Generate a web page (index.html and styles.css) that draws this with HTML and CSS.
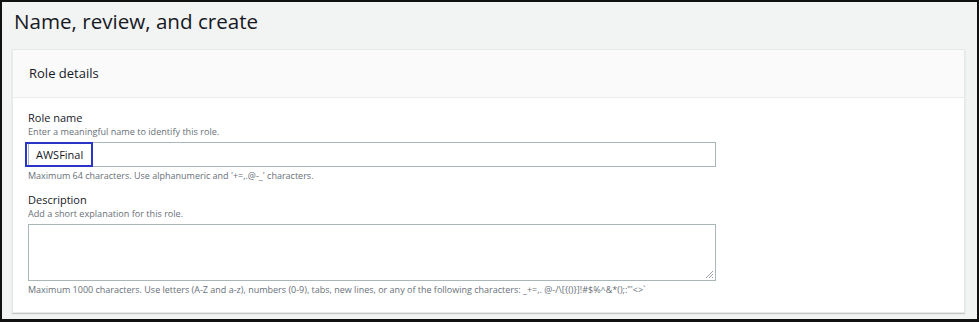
FILE: index.html
```html
<!DOCTYPE html>
<html>
<head>
<meta charset="utf-8">
<link rel="stylesheet" href="styles.css">
</head>
<body>
<div class="frame">
  <h1 class="title">Name, review, and create</h1>
  <section class="card">
    <header class="card-header">Role details</header>
    <div class="card-body">
      <div class="field">
        <div class="label">Role name</div>
        <div class="desc">Enter a meaningful name to identify this role.</div>
        <div class="input-wrap">
          <div class="input">AWSFinal</div>
          <div class="highlight"></div>
        </div>
        <div class="hint">Maximum 64 characters. Use alphanumeric and '+=,.@-_' characters.</div>
      </div>
      <div class="field">
        <div class="label">Description</div>
        <div class="desc">Add a short explanation for this role.</div>
        <div class="textarea">
          <svg class="grip" width="9" height="9" viewBox="0 0 9 9"><path d="M8 1 L1 8 M8 4 L4 8 M8 7 L7 8" stroke="#9aa0a6" stroke-width="1"/></svg>
        </div>
        <div class="hint">Maximum 1000 characters. Use letters (A-Z and a-z), numbers (0-9), tabs, new lines, or any of the following characters: _+=,. @-/\[{()}]!#$%^&amp;*();:"'&lt;&gt;`</div>
      </div>
    </div>
  </section>
</div>
</body>
</html>
```

FILE: styles.css
```css
* { box-sizing: border-box; }
html, body { margin: 0; padding: 0; }
body {
  width: 979px;
  height: 322px;
  background: #000;
  font-family: "Open Sans", "Liberation Sans", sans-serif;
  color: #16191f;
}
.frame {
  width: 979px;
  height: 322px;
  border-style: solid;
  border-color: #111;
  border-width: 2px 2px 3px 2px;
  background: #f2f3f3;
  padding: 0 12px 0 10px;
  overflow: hidden;
}
.title {
  margin: 0;
  padding: 4px 0 0 2px;
  height: 47px;
  font-size: 20.6px;
  font-weight: 400;
  line-height: 30px;
  color: #16191f;
  letter-spacing: 0;
}
.card {
  background: #fff;
  border: 1px solid #e6e9e9;
  box-shadow: 0 1px 1px rgba(0,0,0,0.18);
  height: 264px;
}
.card-header {
  background: #fafafa;
  height: 48px;
  border-bottom: 1px solid #eaeded;
  padding: 14px 0 0 16px;
  font-size: 13px;
  line-height: 18px;
  color: #16191f;
}
.card-body {
  padding: 12px 0 0 15px;
}
.field { display: flex; flex-direction: column; }
.label {
  font-size: 11px;
  line-height: 15px;
  color: #16191f;
}
.desc {
  font-size: 9.1px;
  line-height: 14px;
  color: #687078;
  margin-bottom: 3px;
}
.input-wrap { position: relative; width: 688px; }
.input {
  width: 688px;
  height: 25px;
  border: 1px solid #aab7b8;
  font-size: 11px;
  line-height: 23px;
  padding-left: 7px;
  color: #16191f;
}
.highlight {
  position: absolute;
  left: -3px;
  top: 0;
  width: 68px;
  height: 25px;
  border: 2px solid #2a34c6;
}
.hint {
  font-size: 9px;
  line-height: 14px;
  color: #687078;
  margin-top: 2px;
  margin-bottom: 9px;
}
.textarea {
  position: relative;
  width: 688px;
  height: 57px;
  border: 1px solid #aab7b8;
  margin-top: 0;
}
.grip { position: absolute; right: 1px; bottom: 1px; }
```
